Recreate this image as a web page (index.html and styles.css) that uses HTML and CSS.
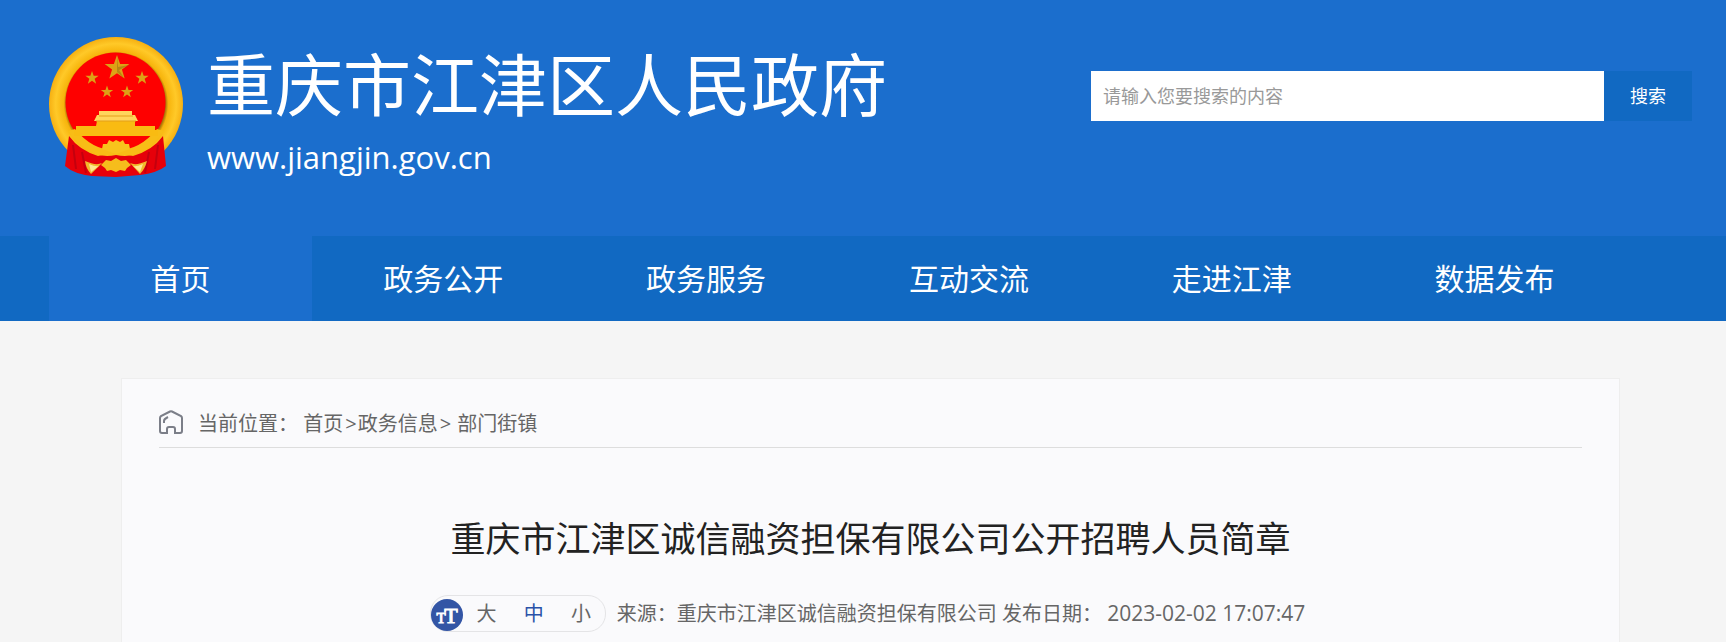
FILE: index.html
```
<!DOCTYPE html>
<html lang="zh-CN">

<head>
	<meta charset="UTF-8">
	<meta name="viewport" content="width=device-width, initial-scale=1.0">
	<title>重庆市江津区诚信融资担保有限公司公开招聘人员简章</title>
	<link rel="stylesheet" href="styles.css">
</head>

<body>
	<header class="header">
		<a class="brand" href="#">
			<svg class="emblem" viewBox="0 0 134 140" aria-hidden="true">
				<defs>
					<radialGradient id="ring" cx="50%" cy="50%" r="50%">
						<stop offset="74%" stop-color="#a87208" />
						<stop offset="78%" stop-color="#f7b40c" />
						<stop offset="90%" stop-color="#ffc928" />
						<stop offset="100%" stop-color="#f6b012" />
					</radialGradient>
					<path id="star" d="M0-10 2.4-3.1 9.5-3.1 3.8 1.2 5.9 8.1 0 4-5.9 8.1-3.8 1.2-9.5-3.1-2.4-3.1Z" />
				</defs>
				<circle cx="67" cy="67" r="67" fill="url(#ring)" />
				<circle cx="66.500" cy="65.500" r="50" fill="#fe0000" />
				<path d="M20 99Q30 113 49 119L67 115 84 119Q104 113 114 99L117 129Q108 136 91 138L67 140 43 139Q25 137 16 129Z" fill="#e6000a" />
				<path d="M24 108 27 132M33 115 37 136M109 108 106 132M100 115 96 136" stroke="#c4000e" stroke-width="2" />
				<path d="M19 94Q40 124 67 118Q94 124 115 94L108 92Q90 114 67 113Q44 114 26 92Z" fill="#f8bd16" />
				<g fill="#dda216">
					<use href="#star" transform="translate(68 31) scale(1.300)" />
					<use href="#star" transform="translate(43 41) scale(.700)" />
					<use href="#star" transform="translate(93 41) scale(.700)" />
					<use href="#star" transform="translate(58 55) scale(.650)" />
					<use href="#star" transform="translate(78 55) scale(.650)" />
				</g>
				<path d="M68 18 69 30 80 28 70 33 75 41 68 35Z" fill="#9c7410" opacity=".6" />
				<path d="M50 74H83V78H86L89 84H45L48 78H50Z" fill="#ffd65c" />
				<path d="M48 84H86V89H106V93H109V99H25V93H27V89H47Z" fill="#f9bb12" />
				<path d="M50 79H84M47 84H87" stroke="#e3a01a" stroke-width="1" />
				<path d="M53 112 54 107 58 107 60 103 64 105 67 103 71 105 74 103 76 107 80 107 81 112 67 117Z" fill="#f8c31c" />
				<path d="M52 128 57 123 62 124 67 121 72 124 77 123 82 128 78 131 76 134 71 133 67 135 62 133 58 134 56 131Z" fill="#f6bd1c" />
				<path d="M36 124Q47 129 53 126L42 137Q37 132 36 124ZM98 124Q87 129 81 126L91 137Q96 132 98 124Z" fill="#f1ba2c" />
				<path d="M40 127Q47 130 50 129L42 135ZM94 127Q87 130 84 129L91 135Z" fill="#ffe890" />
			</svg>
			<span class="brand-text">
				<span class="brand-name">重庆市江津区人民政府</span>
				<span class="brand-url">www.jiangjin.gov.cn</span>
			</span>
		</a>
		<form class="search">
			<input class="search-input" type="text" placeholder="请输入您要搜索的内容" aria-label="搜索内容">
			<button class="search-btn" type="button">搜索</button>
		</form>
	</header>

	<nav class="nav">
		<a class="nav-item active" href="#">首页</a>
		<a class="nav-item" href="#">政务公开</a>
		<a class="nav-item" href="#">政务服务</a>
		<a class="nav-item" href="#">互动交流</a>
		<a class="nav-item" href="#">走进江津</a>
		<a class="nav-item" href="#">数据发布</a>
	</nav>

	<main class="content">
		<div class="crumbs">
			<svg class="home" viewBox="0 0 24 24" aria-hidden="true">
				<path d="M3 23Q1 23 1 21V8Q1 7 2 6L11 1.500Q12 1 13 1.500L22 6Q23 7 23 8V21Q23 23 21 23H16V19Q16 17 14 17H10Q8 17 8 19V23Z" />
				<path d="M5 13V11Q5 9 9 7" />
			</svg>
			<div class="crumbs-text">当前位置： <a href="#">首页</a><span class="sep">&gt;</span><a href="#">政务信息</a><span class="sep">&gt;</span> <a href="#">部门街镇</a></div>
		</div>

		<h1 class="title">重庆市江津区诚信融资担保有限公司公开招聘人员简章</h1>

		<div class="meta">
			<div class="sizes">
				<svg class="sizes-icon" viewBox="0 0 32 32" aria-hidden="true">
					<circle cx="16" cy="16" r="16" fill="#3355a5" />
					<text class="icon-t" x="10" y="24" font-size="15">T</text>
					<text class="icon-t" x="20" y="24" font-size="22">T</text>
				</svg>
				<button class="size" type="button">大</button>
				<button class="size on" type="button">中</button>
				<button class="size" type="button">小</button>
			</div>
			<div class="source">来源：重庆市江津区诚信融资担保有限公司 发布日期： <time class="date">2023-02-02 17:07:47</time></div>
		</div>
	</main>
</body>

</html>
```
FILE: styles.css
```
* {
	box-sizing: border-box;
}

body {
	margin: 0;
	min-height: 100vh;
	display: flex;
	flex-direction: column;
	background: #f5f5f5;
	color: #666;
	font-family: "Open Sans", "Noto Sans CJK SC", sans-serif;
	font-size: 20px;
	line-height: 28px;
}

a {
	color: inherit;
	text-decoration: none;
}

button,
input {
	border: 0 none;
	padding: 0;
	font: inherit;
}

.header {
	display: flex;
	justify-content: space-between;
	align-items: flex-start;
	gap: 40px;
	padding: 37px 34px 59px 49px;
	background: #1b6ecd;
}

.brand {
	display: flex;
	gap: 24px;
	color: #fff;
}

.emblem {
	width: 134px;
	height: 140px;
}

.brand-text {
	display: flex;
	flex-direction: column;
	gap: 4px;
	white-space: nowrap;
}

.brand-name {
	font-size: 68px;
	line-height: 96px;
}

.brand-url {
	font-size: 31px;
	line-height: 40px;
}

.search {
	flex: 0 1 601px;
	display: flex;
	height: 50px;
	margin-top: 34px;
	font-size: 18px;
}

.search-input {
	flex: 1;
	min-width: 0;
	padding: 0 12px;
	background: #fff;
	color: #333;
}

.search-input::placeholder {
	color: #999;
}

.search-btn {
	width: 88px;
	background: #1169c2;
	color: #fff;
}

.nav {
	display: grid;
	grid-template-columns: repeat(6, 1fr);
	padding: 0 100px 0 49px;
	background: #1169c2;
}

.nav-item {
	color: #fff;
	font-size: 30px;
	line-height: 85px;
	text-align: center;
}

.nav-item.active {
	background: #1b6ecd;
}

.content {
	flex: 1;
	margin: 57px 106px 0 121px;
	padding: 31px 37px 10px;
	border: 1px solid #eee;
	border-bottom: 0 none;
	background: #fafafc;
}

.crumbs {
	display: flex;
	gap: 15px;
	padding-bottom: 9px;
	border-bottom: 1px solid #ddd;
}

.sep {
	padding: 0 1px 0 2px;
}

.home {
	width: 24px;
	height: 24px;
	fill: none;
	stroke: #7b7e88;
	stroke-width: 2;
}

.title {
	margin: 66px 0 31px;
	color: #222;
	font-size: 35px;
	font-weight: 400;
	line-height: 50px;
	text-align: center;
}

.meta {
	display: flex;
	justify-content: center;
	gap: 11px;
	padding-right: 6px;
	line-height: 36px;
}

.sizes {
	display: flex;
	width: 176px;
	height: 37px;
	border: 1px solid #e4e4e6;
	border-radius: 18px;
}

.sizes-icon {
	align-self: flex-end;
	width: 32px;
	height: 32px;
}

.icon-t {
	fill: #fff;
	font-family: "Liberation Serif", serif;
	font-weight: 400;
	stroke: #fff;
	text-anchor: middle;
}

.size {
	flex: 1;
	background: none;
	color: #666;
}

.size.on {
	color: #2a52a8;
}

.date {
	font-size: 21px;
}
```
